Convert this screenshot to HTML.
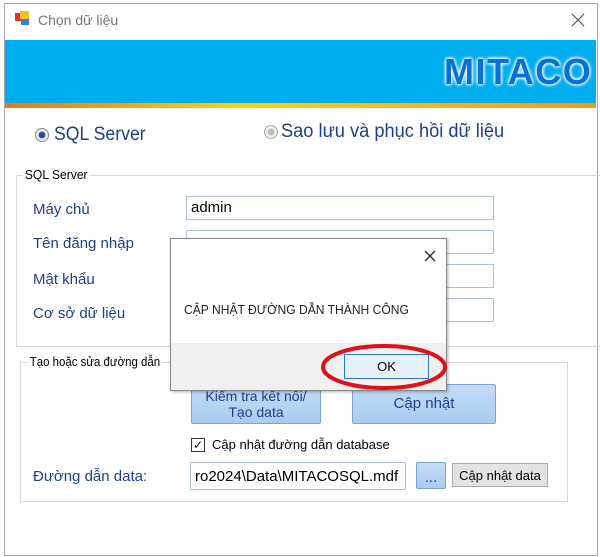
<!DOCTYPE html>
<html><head><meta charset="utf-8"><style>
body{margin:0;width:600px;height:557px;background:#fff;position:relative;overflow:hidden;font-family:"Liberation Sans",sans-serif;}
.a{position:absolute;}
.win{left:4px;top:3px;width:592px;height:551px;border:1px solid #aaa;background:#fff;}
.lbl{color:#1e3f8a;font-size:15px;}
.inp{background:#fff;border:1px solid #a9c3dc;height:24px;box-sizing:border-box;font-size:15px;padding:2px 4px;}
.btn{background:linear-gradient(#c5dcf5,#a9cbf0);border:1px solid #7ea3cc;border-radius:2px;color:#1e3f8a;text-align:center;box-sizing:border-box;}
.grp{border:1px solid #d8d8d8;}
</style></head><body>
<div class="a win"></div>
<div class="a" style="left:15px;top:13px;width:9px;height:8px;background:#d33"></div>
<div class="a" style="left:20px;top:11px;width:9px;height:8px;background:#f4c020"></div>
<div class="a" style="left:21px;top:19px;width:8px;height:6px;background:#3b7fd0"></div>
<div class="a" style="left:38px;top:12px;font-size:14px;color:#777">Chọn dữ liệu</div>
<svg class="a" style="left:571px;top:13px" width="14" height="14"><path d="M1 1L13 13M13 1L1 13" stroke="#555" stroke-width="1.2"/></svg>
<div class="a" style="left:5px;top:40px;width:591px;height:63px;background:#00adef"></div>
<div class="a" style="left:5px;top:103px;width:591px;height:5px;background:linear-gradient(90deg,#e07b1c,#f7d21a 40%,#ef9a20)"></div>
<div class="a" style="left:444px;top:51px;font-size:36px;font-weight:bold;color:#0a6fd6;letter-spacing:1.5px;text-shadow:0 0 3px #fff,0 0 3px #fff,0 0 4px #fff">MITACO</div>
<div class="a" style="left:35px;top:128px;width:12px;height:12px;border:1px solid #888;border-radius:50%;background:radial-gradient(#2a4a9a 35%,#eee 45%)"></div>
<div class="a" style="left:54px;top:124px;font-size:19px;color:#1e3f8a;transform:scaleX(.93);transform-origin:left">SQL Server</div>
<div class="a" style="left:264px;top:125px;width:12px;height:12px;border:1px solid #aaa;border-radius:50%;background:radial-gradient(#bbb 35%,#eee 45%)"></div>
<div class="a" style="left:281px;top:121px;font-size:19px;color:#1e3f8a;transform:scaleX(.96);transform-origin:left">Sao lưu và phục hồi dữ liệu</div>
<div class="a grp" style="left:16px;top:175px;width:585px;height:170px;"></div>
<div class="a" style="left:23px;top:167px;font-size:13px;background:#fff;padding:0 2px;transform:scaleX(.93);transform-origin:left">SQL Server</div>
<div class="a lbl" style="left:33px;top:201px">Máy chủ</div>
<div class="a lbl" style="left:33px;top:235px">Tên đăng nhập</div>
<div class="a lbl" style="left:33px;top:271px">Mật khẩu</div>
<div class="a lbl" style="left:33px;top:305px">Cơ sở dữ liệu</div>
<div class="a inp" style="left:186px;top:196px;width:308px">admin</div>
<div class="a inp" style="left:186px;top:230px;width:308px"></div>
<div class="a inp" style="left:186px;top:264px;width:308px"></div>
<div class="a inp" style="left:186px;top:298px;width:308px"></div>
<div class="a grp" style="left:20px;top:362px;width:546px;height:138px;"></div>
<div class="a" style="left:28px;top:354px;font-size:13px;background:#fff;padding:0 2px;transform:scaleX(.88);transform-origin:left">Tạo hoặc sửa đường dẫn</div>
<div class="a btn" style="left:191px;top:384px;width:130px;height:40px;font-size:14px;line-height:16px;padding-top:3px">Kiểm tra kết nối/ Tạo data</div>
<div class="a btn" style="left:352px;top:384px;width:144px;height:40px;font-size:15px;line-height:38px">Cập nhật</div>
<div class="a" style="left:191px;top:438px;width:12px;height:12px;border:1px solid #333;font-size:12px;line-height:12px;text-align:center">✓</div>
<div class="a" style="left:212px;top:437px;font-size:13px">Cập nhật đường dẫn database</div>
<div class="a lbl" style="left:33px;top:468px">Đường dẫn data:</div>
<div class="a inp" style="left:190px;top:462px;width:216px;height:28px;padding-top:5px">ro2024\Data\MITACOSQL.mdf</div>
<div class="a btn" style="left:416px;top:462px;width:30px;height:27px;font-size:15px;line-height:30px">...</div>
<div class="a" style="left:452px;top:463px;width:96px;height:24px;border:1px solid #aaa;background:#e3e3e3;font-size:13px;text-align:center;line-height:24px;box-sizing:border-box">Cập nhật data</div>
<div class="a" style="left:170px;top:238px;width:277px;height:153px;border:1px solid #888;background:#fff;box-sizing:border-box;box-shadow:1px 1px 3px rgba(0,0,0,.3)"></div>
<div class="a" style="left:171px;top:343px;width:275px;height:47px;background:#f0f0f0"></div>
<svg class="a" style="left:424px;top:250px" width="12" height="12"><path d="M1 1L11 11M11 1L1 11" stroke="#222" stroke-width="1.3"/></svg>
<div class="a" style="left:184px;top:302px;font-size:13px;color:#222;transform:scaleX(.93);transform-origin:left">CẬP NHẬT ĐƯỜNG DẪN THÀNH CÔNG</div>
<div class="a" style="left:344px;top:354px;width:85px;height:25px;border:1px solid #2a7ad0;background:#e5f1fb;box-sizing:border-box;font-size:13px;text-align:center;line-height:23px">OK</div>
<svg class="a" style="left:0;top:0" width="600" height="557"><ellipse cx="384" cy="367" rx="61" ry="21" fill="none" stroke="#e0101a" stroke-width="4"/></svg>
</body></html>
